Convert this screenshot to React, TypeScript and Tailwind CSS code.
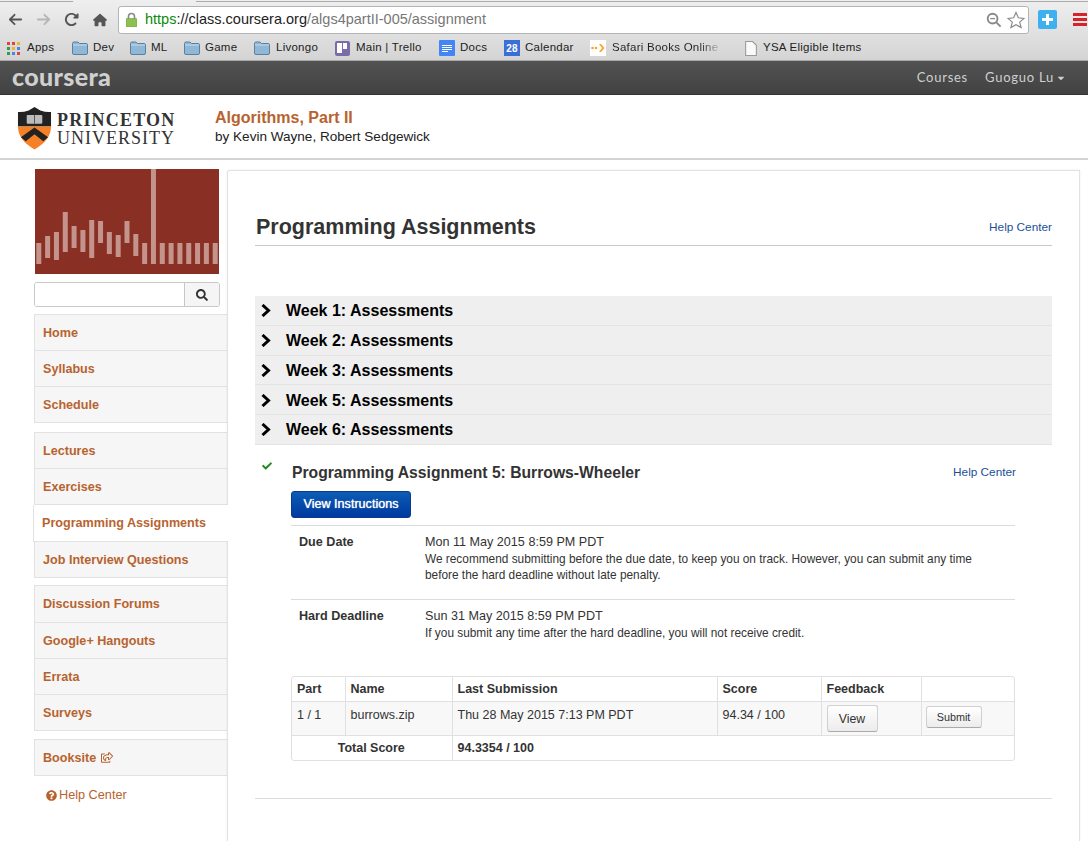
import React from "react";
import { FaQuestionCircle, FaSearch, FaCheck, FaCaretDown, FaRegShareSquare } from "react-icons/fa";
import { FaArrowLeft, FaArrowRight, FaHouse, FaRotateRight } from "react-icons/fa6";

const Folder = () => (
  <svg width="16" height="14" viewBox="0 0 16 14" className="shrink-0">
    <path d="M.5 2.5 Q.5 1 2 1 H6 L7.5 2.5 H14 Q15.5 2.5 15.5 4 V12 Q15.5 13.5 14 13.5 H2 Q.5 13.5 .5 12 Z" fill="#8fb8d8" stroke="#5f7f98" />
    <rect x="1" y="3.5" width="14" height="1" fill="#c8dcec" />
  </svg>
);

const AppsIcon = () => {
  const c = ["#e0443a", "#e0443a", "#f0b429", "#2f9e44", "#f0b429", "#4285f4", "#2f9e44", "#4285f4", "#e0443a"];
  return (
    <div className="grid grid-cols-3 gap-[2px] w-[13px] h-[13px] shrink-0">
      {c.map((x, i) => (
        <div key={i} className="w-[3px] h-[3px]" style={{ background: x }} />
      ))}
    </div>
  );
};

function Bookmark({ icon, label, cls, labelCls = "" }: { icon: React.ReactNode; label: string; cls: string; labelCls?: string }) {
  return (
    <div className={"flex items-center shrink-0 " + cls}>
      {icon}
      <span className={labelCls}>{label}</span>
    </div>
  );
}

function Toolbar() {
  return (
    <div className="h-[61px] bg-gradient-to-b from-[#efefef] to-[#d4d4d4] border-b border-[#a8a8a8]">
      <div className="h-[3px] flex">
        <div className="w-[73px] h-[2px] border-b border-[#aaa]" />
        <div className="w-[123px]" />
        <div className="flex-1 h-[2px] border-b border-[#aaa]" />
      </div>
      <div className="h-[33px] flex items-center">
        <FaArrowLeft className="ml-[8px] text-[#555] w-[15px] h-[15px]" />
        <FaArrowRight className="ml-[13px] text-[#b5b5b5] w-[15px] h-[15px]" />
        <FaRotateRight className="ml-[13px] text-[#555] w-[15px] h-[15px]" />
        <FaHouse className="ml-[14px] text-[#555] w-[14px] h-[14px]" />
        <div className="ml-[11px] w-[911px] h-[28px] bg-white border border-[#b4b4b4] rounded-[3px] flex items-center">
          <svg width="11" height="15" viewBox="0 0 11 15" className="ml-[7px] shrink-0">
            <path d="M2.5 7 V4.5 a3 3 0 0 1 6 0 V7" fill="none" stroke="#8a8a8a" strokeWidth="1.6" />
            <rect x="0" y="6.5" width="11" height="8.5" rx="1" fill="#8cc152" stroke="#6fa03c" strokeWidth=".6" />
          </svg>
          <div className="ml-[8px] text-[14.5px] whitespace-nowrap">
            <span className="text-[#0b8a0b]">https</span>
            <span className="text-[#222]">://class.coursera.org</span>
            <span className="text-[#777]">/algs4partII-005/assignment</span>
          </div>
          <div className="ml-auto flex items-center pr-[3px]">
            <svg width="16" height="16" viewBox="0 0 17 17" fill="none" stroke="#888" strokeWidth="2">
              <circle cx="7" cy="7" r="5.2" />
              <path d="M11 11 L15.5 15.5" />
              <path d="M4.5 7 H9.5" strokeWidth="1.4" />
            </svg>
            <svg width="18" height="18" viewBox="0 0 19 18" fill="#fff" stroke="#888" strokeWidth="1.2" className="ml-[5px]">
              <path d="M9.5 1 L12 6.7 L18 7.3 L13.4 11.2 L14.9 17 L9.5 14 L4.1 17 L5.6 11.2 L1 7.3 L7 6.7 Z" />
            </svg>
          </div>
        </div>
        <div className="ml-[9px] w-[19px] h-[19px] rounded-[2px] bg-[#3fb0ef] flex items-center justify-center shrink-0">
          <svg width="11" height="11" viewBox="0 0 11 11">
            <path d="M4 0 H7 V4 H11 V7 H7 V11 H4 V7 H0 V4 H4 Z" fill="#fff" />
          </svg>
        </div>
        <div className="ml-[16px] w-[14px] flex flex-col gap-[2px] shrink-0">
          <div className="h-[3px] bg-[#d8232a]" />
          <div className="h-[3px] bg-[#d8232a]" />
          <div className="h-[3px] bg-[#d8232a]" />
        </div>
      </div>
      <div className="h-[24px] flex items-center text-[11.5px] tracking-[0.25px] text-[#222] whitespace-nowrap pl-[7px]">
        <Bookmark icon={<AppsIcon />} label="Apps" cls="gap-[7px] w-[65px]" />
        <Bookmark icon={<Folder />} label="Dev" cls="gap-[5px] w-[58px]" />
        <Bookmark icon={<Folder />} label="ML" cls="gap-[5px] w-[54px]" />
        <Bookmark icon={<Folder />} label="Game" cls="gap-[5px] w-[70px]" />
        <Bookmark icon={<Folder />} label="Livongo" cls="gap-[6px] w-[81px]" />
        <Bookmark
          icon={
            <div className="w-[15px] h-[15px] bg-[#7b6ba8] rounded-[2px] flex gap-[1px] p-[2px]">
              <div className="w-[5px] h-[10px] bg-white" />
              <div className="w-[4px] h-[6px] bg-white" />
            </div>
          }
          label="Main | Trello"
          cls="gap-[6px] w-[104px]"
        />
        <Bookmark
          icon={
            <div className="w-[16px] h-[16px] bg-[#4285f4] rounded-[1px] flex flex-col justify-center gap-[1px] px-[3px]">
              <div className="h-[1px] bg-white" />
              <div className="h-[1px] bg-white" />
              <div className="h-[1px] bg-white" />
              <div className="h-[1px] w-[6px] bg-white" />
            </div>
          }
          label="Docs"
          cls="gap-[5px] w-[65px]"
        />
        <Bookmark
          icon={
            <div className="w-[16px] h-[16px] bg-[#3b6fd8] text-white text-[10px] leading-[15px] font-bold text-center pt-[1px]">28</div>
          }
          label="Calendar"
          cls="gap-[5px] w-[86px]"
        />
        <Bookmark
          icon={
            <div className="w-[16px] h-[16px] bg-white flex items-center justify-center">
              <svg width="14" height="8" viewBox="0 0 14 8" fill="#f5a623">
                <circle cx="1.5" cy="4" r="1.3" />
                <circle cx="5" cy="4" r="1.3" />
                <path d="M8 0 H10 L13.5 4 L10 8 H8 L11 4 Z" />
              </svg>
            </div>
          }
          label="Safari Books Online"
          labelCls="bg-gradient-to-r from-[#222] from-[82%] to-[#b4b4b4] bg-clip-text text-transparent"
          cls="gap-[6px] w-[155px]"
        />
        <Bookmark
          icon={
            <svg width="12" height="15" viewBox="0 0 11 14" fill="#fafafa" stroke="#9a9a9a">
              <path d="M.5.5 H7 L10.5 4 V13.5 H.5 Z" />
            </svg>
          }
          label="YSA Eligible Items"
          cls="gap-[6px]"
        />
      </div>
    </div>
  );
}

const navGroups: { items: string[]; mt: string }[] = [
  { items: ["Home", "Syllabus", "Schedule"], mt: "" },
  { items: ["Lectures", "Exercises", "Programming Assignments", "Job Interview Questions"], mt: "mt-[9px]" },
  { items: ["Discussion Forums", "Google+ Hangouts", "Errata", "Surveys"], mt: "mt-[7px]" },
];

const navText = "flex items-center pl-[8px] pt-[1px] text-[#b8632f] font-bold text-[12.6px] border-b border-[#e2e2e2]";

function NavItem({ label }: { label: string }) {
  if (label === "Programming Assignments") {
    return (
      <div className={"relative z-10 h-[37px] -ml-[2px] mr-[-1px] bg-white border-l " + navText}>
        {label}
      </div>
    );
  }
  if (label === "Discussion Forums") {
    return <div className={"h-[37px] bg-[#f6f6f6] " + navText}>{label}</div>;
  }
  return <div className={"h-[36px] bg-[#f6f6f6] " + navText}>{label}</div>;
}

function Sidebar() {
  const bars: [number, number][] = [
    [74, 95],[67, 89],[63, 91],[43, 83],[57, 79],[61, 83],[51, 89],[52, 74],[63, 85],[66, 88],[52, 74],[65, 87],[74, 95],[0, 95],
    [74, 95],[74, 95],[74, 95],[74, 95],[74, 95],[74, 95],[74, 95],
  ];
  return (
    <aside className="w-[193px] shrink-0 ml-[34px] pt-[9px]">
      <svg width="184" height="105" viewBox="0 0 184 105" className="ml-[1px] block">
        <rect width="184" height="105" fill="#8a2f23" />
        {bars.map(([a, b], i) => (
          <rect key={i} x={1.3 + i * 8.82} y={a} width="5" height={b - a} fill="#c4948c" />
        ))}
      </svg>
      <div className="mt-[8px] w-[186px] h-[25px] flex border border-[#c8c8c8] rounded-[3px] overflow-hidden">
        <div className="flex-1 bg-white" />
        <div className="w-[35px] bg-[#f5f5f5] border-l border-[#c8c8c8] flex items-center justify-center">
          <FaSearch className="w-[12px] h-[12px] text-[#333]" />
        </div>
      </div>
      <div className="mt-[7px]">
        {navGroups.map((g, i) => (
          <div key={i} className={"border-l border-t border-[#e2e2e2] " + g.mt}>
            {g.items.map((l) => (
              <NavItem key={l} label={l} />
            ))}
          </div>
        ))}
        <div className="mt-[8px] border-l border-t border-[#e2e2e2]">
          <div className={"h-[36px] bg-[#f6f6f6] gap-[5px] " + navText}>
            Booksite
            <FaRegShareSquare className="w-[12px] h-[11px] -mt-[2px]" />
          </div>
        </div>
      </div>
      <div className="mt-[10px] ml-[12px] flex items-center gap-[2px] text-[12.7px] text-[#b8632f]">
        <FaQuestionCircle className="w-[11px] h-[11px]" />
        Help Center
      </div>
    </aside>
  );
}

const weeks = ["Week 1", "Week 2", "Week 3", "Week 5", "Week 6"];

const th = "border-r border-[#e0e0e0] px-[5px] text-left font-bold align-middle";
const td = "border-r border-[#e0e0e0] px-[5px] pt-[4px] align-top font-normal";

function Main() {
  return (
    <main className="w-[853px] shrink-0 mt-[10px] bg-white border-l border-t border-r border-[#e2e2e2] rounded-tl-[3px] h-[671px] shadow-[0_0_2px_rgba(0,0,0,0.1)] pl-[27px] pr-[27px] text-[#333]">
      <div className="mt-[42px] h-[33px] border-b border-[#c8c8c8] flex justify-between items-start">
        <h1 className="text-[21.5px] leading-[28px] font-bold text-[#333] ml-[1px]">Programming Assignments</h1>
        <a className="text-[11.8px] mt-[6px] text-[#1b4f9c]">Help Center</a>
      </div>
      <div className="mt-[50px]">
        {weeks.map((w) => (
          <div key={w} className="h-[29.75px] bg-[#efefef] border-b border-[#e4e4e4] flex items-center text-black font-bold text-[16px] pt-[1px]">
            <svg width="10" height="13" viewBox="0 0 10 13" fill="none" stroke="#000" strokeWidth="3" className="ml-[6px] shrink-0">
              <path d="M1.5 1 L7.5 6.5 L1.5 12" />
            </svg>
            <span className="ml-[15px] mt-[1px]">{w}: Assessments</span>
          </div>
        ))}
      </div>
      <div className="flex mt-[17px]">
        <FaCheck className="ml-[6px] w-[12px] h-[10px] text-[#1c8a1c] -mt-[1px] shrink-0" />
        <div className="ml-[18px] w-[725px]">
          <div className="flex justify-between items-center h-[22px]">
            <h2 className="text-[15.7px] font-bold text-[#333] ml-[1px] mt-[1px]">Programming Assignment 5: Burrows-Wheeler</h2>
            <a className="text-[11.8px] text-[#1b4f9c] mt-[1px]">Help Center</a>
          </div>
          <button className="mt-[7px] w-[120px] h-[27px] pt-[1px] rounded-[3px] bg-gradient-to-b from-[#0e5cb4] to-[#0138a0] border border-[#0a3a8e] text-white text-[12.6px] [text-shadow:0_0_1px_#fff] block">
            View Instructions
          </button>
          <div className="mt-[7px] w-[724px] border-t border-[#dcdcdc] h-[74px] flex pl-[8px] pt-[8px]">
            <div className="w-[126px] font-bold text-[12.6px] leading-[15px] text-[#333] mt-[1px]">Due Date</div>
            <div className="text-[12.6px] leading-[15px] mt-[1px]">
              Mon 11 May 2015 8:59 PM PDT
              <p className="text-[11.85px] leading-[16px] mt-[1px] w-[570px]">
                We recommend submitting before the due date, to keep you on track. However, you can submit any time before the hard deadline without late penalty.
              </p>
            </div>
          </div>
          <div className="w-[724px] border-t border-[#dcdcdc] h-[77px] flex pl-[8px] pt-[8px]">
            <div className="w-[126px] font-bold text-[12.6px] leading-[15px] text-[#333] mt-[1px]">Hard Deadline</div>
            <div className="text-[12.6px] leading-[15px] mt-[1px]">
              Sun 31 May 2015 8:59 PM PDT
              <p className="text-[11.85px] leading-[16px] mt-[1px]">
                If you submit any time after the hard deadline, you will not receive credit.
              </p>
            </div>
          </div>
          <div className="border border-[#e0e0e0] rounded-[3px] w-[724px] overflow-hidden">
            <table className="w-full table-fixed border-collapse text-[12.5px] text-[#333]">
              <colgroup>
                <col className="w-[53px]" />
                <col className="w-[107px]" />
                <col className="w-[265px]" />
                <col className="w-[104px]" />
                <col className="w-[100px]" />
                <col />
              </colgroup>
              <tbody>
                <tr className="h-[25px] border-b border-[#e0e0e0]">
                  <th className={th}>Part</th>
                  <th className={th}>Name</th>
                  <th className={th}>Last Submission</th>
                  <th className={th}>Score</th>
                  <th className={th}>Feedback</th>
                  <th />
                </tr>
                <tr className="h-[34px] bg-[#f8f8f8] border-b border-[#e0e0e0]">
                  <td className={td}>1 / 1</td>
                  <td className={td}>burrows.zip</td>
                  <td className={td}>Thu 28 May 2015 7:13 PM PDT</td>
                  <td className={td}>94.34 / 100</td>
                  <td className="border-r border-[#e0e0e0] px-[5px] align-middle">
                    <button className="w-[51px] h-[27px] rounded-[3px] border border-[#d0d0d0] border-b-[#aaa] bg-gradient-to-b from-white to-[#ececec] text-[12.3px] block">
                      View
                    </button>
                  </td>
                  <td className="px-[4px] align-top pt-[4px]">
                    <button className="w-[56px] h-[22px] rounded-[3px] border border-[#d0d0d0] border-b-[#aaa] bg-gradient-to-b from-white to-[#ececec] text-[10.8px] block">
                      Submit
                    </button>
                  </td>
                </tr>
                <tr className="h-[24px]">
                  <th colSpan={2} className="border-r border-[#e0e0e0] text-center font-bold pr-[1px]">Total Score</th>
                  <th colSpan={4} className="text-left font-bold px-[5px]">94.3354 / 100</th>
                </tr>
              </tbody>
            </table>
          </div>
        </div>
      </div>
      <div className="mt-[37px] border-t border-[#dcdcdc]" />
    </main>
  );
}

export default function App() {
  return (
    <div className="w-[1088px] h-[841px] overflow-hidden bg-white font-['Liberation_Sans',sans-serif]">
      <Toolbar />
      <div className="h-[34px] bg-gradient-to-b from-[#525252] to-[#424242] flex items-center border-b border-[#333]">
        <span className="ml-[12px] font-['Lato',sans-serif] font-black text-[25px] tracking-[0.35px] text-[#d0d0d0] leading-none -mt-[2px]">coursera</span>
        <div className="ml-auto flex items-center text-[13px] tracking-[0.75px] text-[#cfcfcf] font-['Lato',sans-serif] pr-[22px]">
          <span>Courses</span>
          <span className="ml-[17px]">Guoguo Lu</span>
          <FaCaretDown className="ml-[2px] w-[10px] h-[10px]" />
        </div>
      </div>
      <header className="h-[65px] bg-white border-b-2 border-[#d4d4d4] flex items-center">
        <svg width="35" height="43" viewBox="0 0 36 44" className="ml-[17px] mt-[3px] shrink-0">
          <path d="M18 0 L24 3.5 Q30 5.5 35 5 V20 H1 V5 Q6 5.5 12 3.5 Z" fill="#222" />
          <path d="M1 20 H35 Q35 34 18 43.5 Q1 34 1 20 Z" fill="#f58025" />
          <path d="M4 31 L18 21 L32 31 L27 35 L18 28 L9 35 Z" fill="#222" />
          <rect x="10" y="8" width="16" height="9" rx="1" fill="#bbb" />
          <path d="M18 8 V17" stroke="#555" strokeWidth="1" />
        </svg>
        <div className="ml-[5px] mt-[5px] font-['Liberation_Serif',serif] text-[#333] text-[18px] leading-[18px] tracking-[1.2px] w-[125px] whitespace-nowrap">
          <div className="font-bold">PRINCETON</div>
          <div className="tracking-[1px]">UNIVERSITY</div>
        </div>
        <div className="ml-[33px] mt-[1px]">
          <div className="text-[#b8632f] font-bold text-[16px] leading-[20px]">Algorithms, Part II</div>
          <div className="text-[#222] text-[13.55px] leading-[18px]">by Kevin Wayne, Robert Sedgewick</div>
        </div>
      </header>
      <div className="flex">
        <Sidebar />
        <Main />
      </div>
    </div>
  );
}
